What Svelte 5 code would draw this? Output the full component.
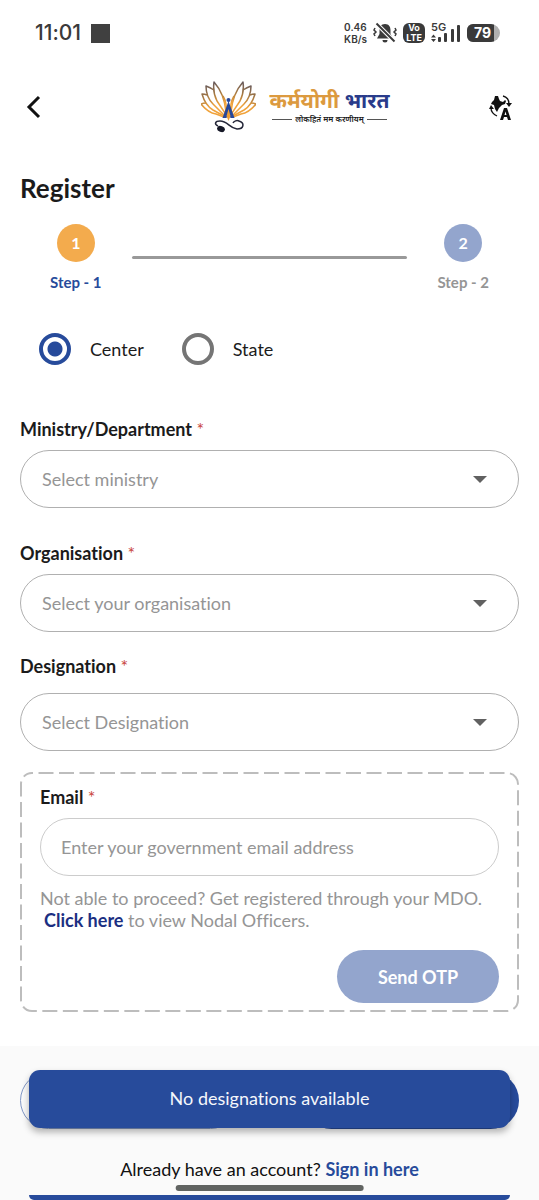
<script lang="ts">
	let level = $state('center');

	const levels = [
		{ id: 'center', label: 'Center' },
		{ id: 'state', label: 'State' }
	];

	const fields = [
		{ id: 'ministry', label: 'Ministry/Department', placeholder: 'Select ministry' },
		{ id: 'organisation', label: 'Organisation', placeholder: 'Select your organisation' },
		{ id: 'designation', label: 'Designation', placeholder: 'Select Designation' }
	];

	// the right wing of the lotus is the left one mirrored
	const wings = ['', 'translate(55 0) scale(-1 1)'];
</script>

<div class="screen">
	<div class="status">
		<span class="time">11:01</span>
		<span class="block"></span>
		<div class="status-right">
			<span class="speed">0.46<br />KB/s</span>
			<svg class="bell" viewBox="0 0 24 22" width="24" height="22">
				<path d="M12 2c-4 0-5.500 3-5.500 6v4L4 16.500h16L17.500 12V8c0-3-1.500-6-5.500-6zM9.500 18h5a2.500 2.500 0 0 1-5 0z" fill="#3a3a3a" />
				<path d="M3 1l18 18" stroke="#fff" stroke-width="4" />
				<path d="M3.500 1.500l18 18" stroke="#3a3a3a" stroke-width="2" />
				<path d="M2 6l-1 2 2 2-2 2 1 2M22 6l1 2-2 2 2 2-1 2" fill="none" stroke="#3a3a3a" stroke-width="1.500" />
			</svg>
			<span class="volte">Vo<br />LTE</span>
			<div class="signal">
				<span class="net">5G</span>
				<svg viewBox="0 0 30 19" width="30" height="19" fill="#3a3a3a">
					<path d="M0 13.500l2.500-3 2.500 3zM0 15h5l-2.500 3z" />
					<rect x="7" y="13" width="3" height="5" rx="1" />
					<rect x="13" y="9" width="3" height="9" rx="1" />
					<rect x="20" y="5" width="3" height="13" rx="1" />
					<rect x="26" y="1" width="3" height="17" rx="1" />
				</svg>
			</div>
			<span class="battery"><span class="charge">79</span></span>
		</div>
	</div>

	<header class="appbar">
		<button class="icon-btn" aria-label="Back">
			<svg viewBox="0 0 16 24" width="16" height="24"><path d="M13 2L3 12l10 10" fill="none" stroke="#111" stroke-width="3" /></svg>
		</button>
		<div class="brand">
			<svg viewBox="0 0 55 52" width="55" height="52" fill="none">
				<defs>
					<linearGradient id="petal" gradientUnits="userSpaceOnUse" x1="10" y1="0" x2="20" y2="34">
						<stop offset="0" stop-color="#5d5560" />
						<stop offset="0.400" stop-color="#a87a42" />
						<stop offset="0.700" stop-color="#f0a23a" />
					</linearGradient>
				</defs>
				{#each wings as transform}
					<g {transform} stroke="url(#petal)" stroke-width="1.500" stroke-linejoin="round">
						<path d="M25 31C24 20 21 10 13 1c-1 7 0 13 3 19l8 12" />
						<path d="M13 9C10 7 8 6 5 5c0 8 3 14 7 18l11 11" />
						<path d="M6 14c-2-1-3-1-5-1 2 7 6 13 11 16l11 6" />
						<path d="M5 22c-2 0-3 0-5 1 4 5 9 9 15 10l8 3" />
						<path d="M22 15c3 5 4 11 3 18" />
					</g>
				{/each}
				<path d="M27.500 20l-6 17h4l2-5 2 5h4z" fill="#26479a" />
				<path d="M27.500 28l-2 7 2 5 2-5z" fill="#ec9d34" />
				<circle cx="27.500" cy="19" r="2" fill="#26479a" />
				<path d="M17 45c-4-2-3-5 2-5 8 0 9 7 17 8 7 0 8-6 2-8-2-1-5 0-6 2" stroke="#242638" stroke-width="1.500" />
				<ellipse cx="20" cy="48" rx="4" ry="3" transform="rotate(20 20 48)" fill="#161827" />
			</svg>
			<div class="brand-text">
				<div class="brand-name"><span class="gold">कर्मयोगी</span> <span class="blue">भारत</span></div>
				<div class="motto"><span>लोकहितं मम करणीयम्</span></div>
			</div>
		</div>
		<button class="icon-btn" aria-label="Change language">
			<svg viewBox="0 0 24 26" width="24" height="26">
				<path d="M6 2h3l1 3 1 2 3 1 2-2 1 1-1 3-3 1-3 3-2 4-2-3-1-4-3-1 1-2 2-2z" fill="#111" />
				<path d="M14 2c4 1 6 4 6 8M2 14c0 4 2 6 6 8" fill="none" stroke="#111" stroke-width="1.300" />
				<path d="M17 9h6l-3 4zM0 15l2-4 3 4z" fill="#111" />
				<path d="M11 26l4-12h3l4 12h-3l-1-3h-3l-1 3zM15.500 21h2l-1-3.500z" fill="#111" fill-rule="evenodd" />
			</svg>
		</button>
	</header>

	<main>
		<h1>Register</h1>

		<ol class="steps">
			<li class="step active"><span class="dot">1</span><span>Step - 1</span></li>
			<li class="line" aria-hidden="true"></li>
			<li class="step"><span class="dot">2</span><span>Step - 2</span></li>
		</ol>

		<div class="levels">
			{#each levels as item}
				<label>
					<input type="radio" name="level" value={item.id} bind:group={level} />
					{item.label}
				</label>
			{/each}
		</div>

		{#each fields as field}
			<div class="field {field.id}">
				<label for={field.id}>{field.label} <span class="star">*</span></label>
				<div class="select">
					<select id={field.id}>
						<option value="">{field.placeholder}</option>
					</select>
					<svg viewBox="0 0 14 7" width="14" height="7"><path d="M0 0h14L7 7z" fill="#616161" /></svg>
				</div>
			</div>
		{/each}

		<section class="email-card">
			<svg class="dashes" aria-hidden="true"><rect x="1" y="1" rx="11" /></svg>
			<label for="email">Email <span class="star">*</span></label>
			<input id="email" type="email" placeholder="Enter your government email address" />
			<p>Not able to proceed? Get registered through your MDO.<br /><a href="#nodal">Click here</a> to view Nodal Officers.</p>
			<button class="otp">Send OTP</button>
		</section>
	</main>

	<footer>
		<div class="actions">
			<button class="outlined" aria-label="Back"></button>
			<button class="filled" aria-label="Next"></button>
			<div class="toast" role="status">No designations available</div>
		</div>
		<p class="signin">Already have an account? <a href="#signin">Sign in here</a></p>
		<div class="peek"></div>
		<div class="home-bar"></div>
	</footer>
</div>

<style>
	:global(body) {
		margin: 0;
		background: #fff;
	}

	* {
		box-sizing: border-box;
	}

	.screen {
		display: flex;
		flex-direction: column;
		min-height: 100vh;
		font-family: Lato, sans-serif;
		font-size: 18px;
		line-height: 24px;
		font-variant-ligatures: none;
		color: #1b1b1b;
	}

	button {
		font: inherit;
		border: none;
		padding: 0;
		cursor: pointer;
	}

	a {
		font-weight: 700;
		text-decoration: none;
	}

	.status {
		display: flex;
		align-items: center;
		height: 66px;
		padding: 0 39px 0 35px;
		font-family: Inter, sans-serif;
		color: #3a3a3a;
	}

	.time {
		font-size: 21px;
		font-weight: 500;
	}

	.block {
		width: 19px;
		height: 19px;
		margin-left: 10px;
		background: #404040;
	}

	.status-right {
		display: flex;
		align-items: center;
		gap: 6px;
		margin-left: auto;
	}

	.speed {
		font-size: 10px;
		font-weight: 600;
		line-height: 12px;
	}

	.volte {
		width: 22px;
		height: 20px;
		border-radius: 6px;
		background: #3a3a3a;
		color: #fff;
		font-size: 9px;
		font-weight: 700;
		line-height: 10px;
		text-align: center;
	}

	.signal {
		display: grid;
	}

	.signal > * {
		grid-area: 1 / 1;
	}

	.net {
		margin-top: -3px;
		font-size: 11px;
		font-weight: 600;
		line-height: 12px;
	}

	.battery {
		display: flex;
		width: 33px;
		height: 18px;
		border-radius: 6px 9px 9px 6px;
		background: #b0b0b0;
		overflow: hidden;
	}

	.charge {
		width: 27px;
		background: #3a3a3a;
		color: #fff;
		font-size: 14px;
		font-weight: 700;
		line-height: 18px;
		text-align: center;
		padding-left: 4px;
	}

	.appbar {
		display: flex;
		align-items: center;
		justify-content: space-between;
		height: 82px;
		padding: 0 26px;
	}

	.icon-btn {
		display: flex;
		background: none;
	}

	.brand {
		display: flex;
		align-items: center;
		gap: 13px;
		padding-left: 60px;
	}

	.brand-text {
		font-family: "Noto Sans Devanagari", "Noto Sans", sans-serif;
	}

	.brand-name {
		font-size: 21px;
		font-weight: 700;
		line-height: 26px;
		white-space: nowrap;
	}

	.gold {
		color: #dc9a3f;
	}

	.blue {
		color: #293b8b;
	}

	.motto {
		display: flex;
		align-items: center;
		gap: 3px;
		margin-top: -1px;
		padding: 0 3px;
		font-size: 8px;
		font-weight: 600;
		line-height: 10px;
		white-space: nowrap;
	}

	.motto::before,
	.motto::after {
		content: '';
		flex: 1;
		height: 1px;
		background: #555;
	}

	main {
		padding: 24px 20px 34px;
	}

	h1 {
		margin: 0;
		font-size: 26px;
		line-height: 32px;
		font-weight: 700;
	}

	.steps {
		display: flex;
		justify-content: space-between;
		margin: 20px 0 0;
		padding: 0 30px;
		list-style: none;
	}

	.step {
		display: flex;
		flex-direction: column;
		align-items: center;
		gap: 8px;
		color: #959595;
		font-size: 15px;
		font-weight: 700;
	}

	.step.active {
		color: #274b9b;
	}

	.dot {
		width: 38px;
		height: 38px;
		border-radius: 50%;
		background: #93a5cd;
		color: #fff;
		font-size: 16px;
		line-height: 38px;
		text-align: center;
	}

	.active .dot {
		background: #f3ab4d;
	}

	.line {
		flex: 1;
		height: 3px;
		margin: 32px 30px 0;
		border-radius: 2px;
		background: #999;
	}

	.levels {
		display: flex;
		gap: 38px;
		padding: 39px 19px 0;
	}

	.levels label {
		display: flex;
		align-items: center;
		gap: 19px;
	}

	.levels input {
		appearance: none;
		width: 32px;
		height: 32px;
		margin: 0;
		border: 4px solid #757575;
		border-radius: 50%;
	}

	.levels input:checked {
		border-color: #274b9b;
		background: radial-gradient(circle, #274b9b 7px, transparent 8px);
	}

	.field {
		padding-top: 33px;
	}

	.field.ministry {
		padding-top: 52px;
	}

	.field.designation {
		padding-top: 22px;
	}

	.field > label,
	.email-card label {
		display: block;
		font-weight: 700;
		line-height: 24px;
	}

	.star {
		color: #c9453c;
		font-weight: 400;
	}

	.select {
		display: grid;
		align-items: center;
		margin-top: 9px;
	}

	.designation .select {
		margin-top: 15px;
	}

	.select > * {
		grid-area: 1 / 1;
	}

	.select svg {
		justify-self: end;
		margin-right: 32px;
		pointer-events: none;
	}

	select,
	.email-card input {
		appearance: none;
		width: 100%;
		height: 58px;
		padding: 0 21px;
		border: 1px solid #b0b0b0;
		border-radius: 29px;
		background: #fff;
		color: #959595;
		font: inherit;
	}

	.email-card {
		position: relative;
		margin-top: 21px;
		padding: 13px 20px 9px;
	}

	.email-card input {
		display: block;
		margin-top: 9px;
		padding: 0 20px;
		border-color: #ccc;
	}

	.email-card input::placeholder {
		color: #959595;
		opacity: 1;
	}

	.dashes {
		position: absolute;
		inset: 0;
		width: 100%;
		height: 100%;
		pointer-events: none;
	}

	.dashes rect {
		width: calc(100% - 2px);
		height: calc(100% - 2px);
		fill: none;
		stroke: #bdbdbd;
		stroke-width: 2;
		stroke-dasharray: 15 5.5;
		stroke-dashoffset: 14;
	}

	.email-card p {
		margin: 11px 0 0;
		color: #959595;
		line-height: 22px;
	}

	.email-card a {
		margin-left: 4px;
		color: #1b2f82;
	}

	.otp {
		display: block;
		width: 162px;
		height: 53px;
		margin: 19px 0 0 auto;
		border-radius: 27px;
		background: #93a5cd;
		color: #fff;
		font-weight: 700;
	}

	footer {
		position: relative;
		flex: 1;
		display: flex;
		flex-direction: column;
		padding-top: 24px;
		background: #fafafa;
	}

	.actions {
		position: relative;
		display: flex;
		gap: 64px;
		padding: 2px 20px 0;
	}

	.actions button {
		flex: 1;
		height: 57px;
		border-radius: 29px;
	}

	.outlined {
		border: 1px solid #8197c5;
		background: #fafafa;
	}

	.filled {
		background: #274b9b;
	}

	.toast {
		position: absolute;
		inset: 0 29px 1px;
		border-radius: 11px;
		background: #274b9b;
		box-shadow: 0 4px 7px rgba(0, 0, 0, 0.3);
		color: #f5f7fb;
		line-height: 57px;
		text-align: center;
	}

	.signin {
		margin: 28px 0 14px;
		text-align: center;
		color: #111;
	}

	.signin a {
		color: #274b9b;
	}

	.peek {
		height: 5px;
		margin: auto 29px 0;
		background: #274b9b;
		border-radius: 0 0 5px 5px;
	}

	.home-bar {
		position: absolute;
		bottom: 9px;
		left: 50%;
		width: 35%;
		height: 6px;
		border-radius: 3px;
		background: #616462;
		transform: translateX(-50%);
	}
</style>
